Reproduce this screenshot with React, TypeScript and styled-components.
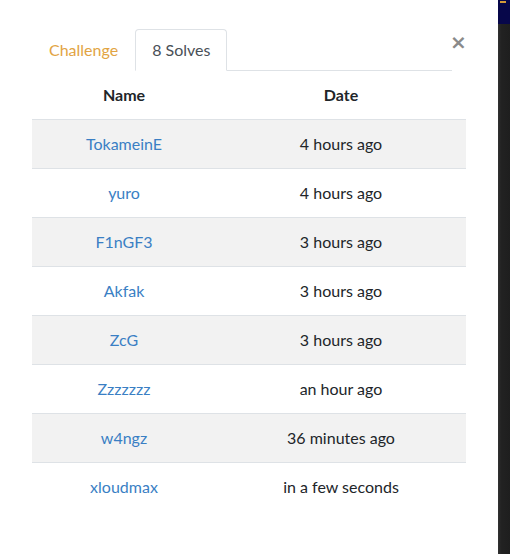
import React from "react";
import styled, { createGlobalStyle } from "styled-components";

const Global = createGlobalStyle`
  html, body { margin: 0; padding: 0; background: #fff; }
  body { font-family: Lato, "Open Sans", "Noto Sans", sans-serif; color: #212529; }
`;

const Page = styled.div`
  display: flex;
  width: 510px;
  height: 554px;
  overflow: hidden;
`;

const Modal = styled.div`
  width: 498px;
  background: #fff;
  padding: 29px 0 0 32px;
  box-sizing: border-box;
`;

const Strip = styled.div`
  width: 12px;
  display: flex;
  flex-direction: column;
`;

const StripTop = styled.div`
  height: 24px;
  background: #07074a;
  position: relative;
  &::after {
    content: "";
    position: absolute;
    top: 1px;
    left: 2px;
    width: 6px;
    height: 2px;
    background: #d49b3a;
  }
`;

const StripBody = styled.div`
  flex: 1;
  background: linear-gradient(90deg, #333 0%, #222 25%, #1e1e1e 100%);
`;

const Header = styled.div`
  display: flex;
  align-items: flex-start;
`;

const Tabs = styled.nav`
  display: flex;
  width: 420px;
  border-bottom: 1px solid #dee2e6;
`;

const Tab = styled.div<{ $active?: boolean }>`
  padding: 8px 16px;
  font-size: 16px;
  line-height: 24px;
  border: 1px solid ${(p) => (p.$active ? "#dee2e6" : "transparent")};
  border-bottom-color: ${(p) => (p.$active ? "#fff" : "transparent")};
  border-radius: 4px 4px 0 0;
  margin-bottom: -1px;
  color: ${(p) => (p.$active ? "#495057" : "#e2a443")};
  background: #fff;
`;

const Close = styled.button`
  border: none;
  background: none;
  padding: 0;
  margin: 3px 0 0 -2px;
  font-family: "DejaVu Sans", sans-serif;
  font-size: 20px;
  line-height: 20px;
  font-weight: bold;
  color: #8a8a8a;
  cursor: pointer;
`;

const Table = styled.table`
  width: 434px;
  table-layout: fixed;
  border-collapse: collapse;
  font-size: 16px;
  line-height: 24px;
  text-align: center;
`;

const Col = styled.col<{ $w: number }>`
  width: ${(p) => p.$w}px;
`;

const Th = styled.th`
  padding: 12px;
  font-weight: 700;
  color: #212529;
`;

const Row = styled.tr<{ $odd: boolean }>`
  background: ${(p) => (p.$odd ? "#f2f2f2" : "#fff")};
  border-top: 1px solid #dee2e6;
`;

const Td = styled.td`
  padding: 12px;
  height: 24px;
`;

const Name = styled.a`
  color: #3a7fc4;
  text-decoration: none;
`;

const solves = [
  ["TokameinE", "4 hours ago"],
  ["yuro", "4 hours ago"],
  ["F1nGF3", "3 hours ago"],
  ["Akfak", "3 hours ago"],
  ["ZcG", "3 hours ago"],
  ["Zzzzzzz", "an hour ago"],
  ["w4ngz", "36 minutes ago"],
  ["xloudmax", "in a few seconds"],
];

export default function App() {
  return (
    <Page>
      <Global />
      <Modal>
        <Header>
          <Tabs>
            <Tab>Challenge</Tab>
            <Tab $active>8 Solves</Tab>
          </Tabs>
          <Close aria-label="Close">×</Close>
        </Header>
        <Table>
          <colgroup>
            <Col $w={184} />
            <Col $w={250} />
          </colgroup>
          <thead>
            <tr>
              <Th>Name</Th>
              <Th>Date</Th>
            </tr>
          </thead>
          <tbody>
            {solves.map(([n, d], i) => (
              <Row key={n} $odd={i % 2 === 0}>
                <Td>
                  <Name href="#">{n}</Name>
                </Td>
                <Td>{d}</Td>
              </Row>
            ))}
          </tbody>
        </Table>
      </Modal>
      <Strip>
        <StripTop />
        <StripBody />
      </Strip>
    </Page>
  );
}
